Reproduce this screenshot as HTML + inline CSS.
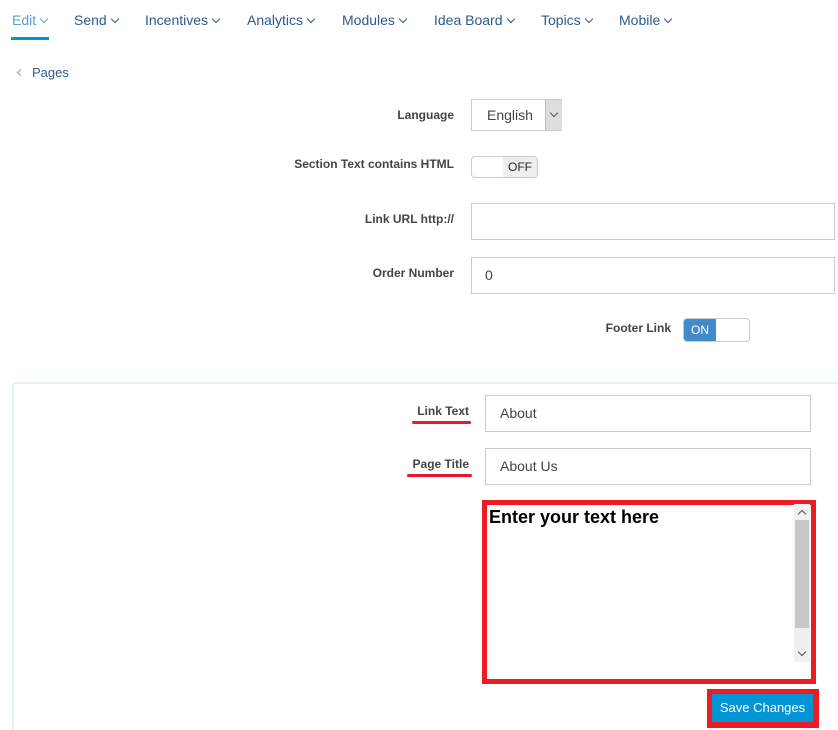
<!DOCTYPE html>
<html style="overflow:hidden;height:730px"><head><meta charset="utf-8"><style>
body{margin:0;width:838px;height:730px;background:#fff;font-family:"Liberation Sans",sans-serif;position:relative;overflow:hidden}
.a{position:absolute}
.nav{top:12px;font-size:14px;color:#2c5a8c}
.nav i{display:inline-block;width:5px;height:5px;border-right:1.2px solid #2c5a8c;border-bottom:1.2px solid #2c5a8c;transform:rotate(45deg);margin-left:5px;position:relative;top:-3px}
.lbl{font-size:12px;font-weight:bold;color:#444;text-align:right}
.inp{border:1px solid #ccc;box-sizing:border-box;background:#fff;font-size:14px;color:#444}
.chev{display:block;width:5px;height:5px;border-right:1.3px solid #555;border-bottom:1.3px solid #555;transform:rotate(45deg)}
</style></head><body>
<div class="a nav" style="left:12px;color:#5a9fd6">Edit<i style="border-color:#5a9fd6"></i></div>
<div class="a" style="left:11px;top:37px;width:38px;height:3px;background:#0096d6"></div>
<div class="a nav" style="left:74px">Send<i></i></div>
<div class="a nav" style="left:145px">Incentives<i></i></div>
<div class="a nav" style="left:247px">Analytics<i></i></div>
<div class="a nav" style="left:342px">Modules<i></i></div>
<div class="a nav" style="left:434px">Idea Board<i></i></div>
<div class="a nav" style="left:541px">Topics<i></i></div>
<div class="a nav" style="left:619px">Mobile<i></i></div>
<div class="a" style="left:18px;top:70px;width:4px;height:4px;border-left:1.2px solid #999;border-bottom:1.2px solid #999;transform:rotate(45deg)"></div>
<div class="a" style="left:32px;top:65px;font-size:13px;color:#2c5a8c">Pages</div>

<div class="a lbl" style="right:384px;top:108px">Language</div>
<div class="a inp" style="left:471px;top:99px;width:91px;height:32px;padding:7px 0 0 15px">English</div>
<div class="a" style="left:545px;top:100px;width:16px;height:30px;background:#ddd;border-left:1px solid #bbb"><span class="chev" style="position:absolute;left:5px;top:10px"></span></div>

<div class="a lbl" style="right:384px;top:157px">Section Text contains HTML</div>
<div class="a" style="left:471px;top:156px;width:67px;height:22px;border:1px solid #ccc;border-radius:4px;box-sizing:border-box;overflow:hidden"><div class="a" style="right:0;top:0;width:34px;height:20px;background:#eee;font-size:12px;color:#222;text-align:center;line-height:20px">OFF</div></div>

<div class="a lbl" style="right:384px;top:212px">Link URL http://</div>
<div class="a inp" style="left:471px;top:203px;width:364px;height:37px"></div>
<div class="a lbl" style="right:384px;top:266px">Order Number</div>
<div class="a inp" style="left:471px;top:257px;width:364px;height:37px;padding:9px 0 0 13px">0</div>

<div class="a lbl" style="right:167px;top:321px">Footer Link</div>
<div class="a" style="left:683px;top:318px;width:67px;height:24px;border:1px solid #ccc;border-radius:4px;box-sizing:border-box;overflow:hidden"><div class="a" style="left:0;top:0;width:32px;height:22px;background:#428bca;font-size:12px;color:#fff;text-align:center;line-height:22px">ON</div></div>

<div class="a" style="left:12px;top:382px;width:826px;height:348px;border-top:2px solid #e3f2f5;border-left:2px solid #e3f2f5;border-radius:4px 0 0 0;box-sizing:border-box"></div>

<div class="a lbl" style="right:369px;top:404px">Link Text</div>
<div class="a" style="left:412px;top:421px;width:59px;height:3px;background:#e8182a;border-radius:2px"></div>
<div class="a inp" style="left:485px;top:395px;width:326px;height:37px;padding:9px 0 0 14px">About</div>
<div class="a lbl" style="right:369px;top:457px">Page Title</div>
<div class="a" style="left:407px;top:474px;width:65px;height:3px;background:#e8182a;border-radius:2px"></div>
<div class="a inp" style="left:485px;top:448px;width:326px;height:37px;padding:9px 0 0 14px">About Us</div>

<div class="a" style="left:482px;top:500px;width:334px;height:184px;border:5px solid #ed1c24;box-sizing:border-box"></div>
<div class="a" style="left:489px;top:507px;font-size:18px;font-weight:bold;color:#000">Enter your text here</div>
<div class="a" style="left:794px;top:504px;width:16px;height:158px;background:#f0f0f0"></div>
<div class="a" style="left:795px;top:520px;width:14px;height:108px;background:#c8c8c8"></div>
<span class="a chev" style="left:799px;top:511px;transform:rotate(225deg)"></span>
<span class="a chev" style="left:799px;top:649px"></span>

<div class="a" style="left:707px;top:689px;width:112px;height:39px;background:#ed1c24"></div>
<div class="a" style="left:712px;top:694px;width:101px;height:28px;background:#0096d6;color:#fff;font-size:13px;text-align:center;line-height:28px">Save Changes</div>
</body></html>
